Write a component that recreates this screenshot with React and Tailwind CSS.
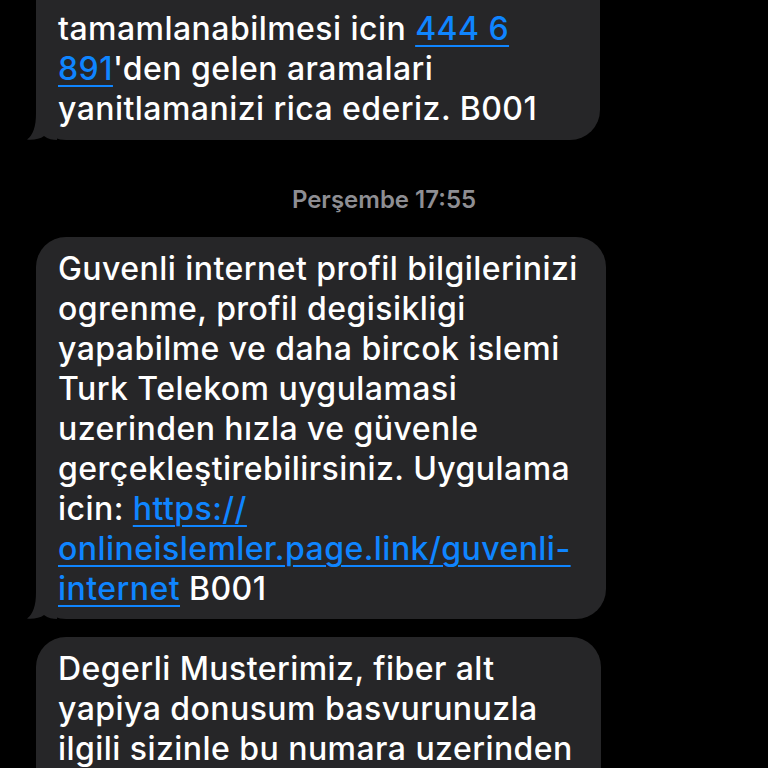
import React from "react";

// Received message bubbles (dark mode)
const bubbles = [
  {
    width: "w-[564px]",
    lines: [
      ["Sayin Musterimiz, internet"],
      ["Kurulumunuzun basari ile"],
      ["tamamlanabilmesi icin ", { link: "444 6" }],
      [{ link: "891" }, "'den gelen aramalari"],
      ["yanitlamanizi rica ederiz. B001"],
    ],
    tail: true,
  },
];

const thursday = [
  {
    width: "w-[570px]",
    lines: [
      ["Guvenli internet profil bilgilerinizi"],
      ["ogrenme, profil degisikligi"],
      ["yapabilme ve daha bircok islemi"],
      ["Turk Telekom uygulamasi"],
      ["uzerinden hızla ve güvenle"],
      ["gerçekleştirebilirsiniz. Uygulama"],
      ["icin: ", { link: "https://" }],
      [{ link: "onlineislemler.page.link/guvenli-" }],
      [{ link: "internet" }, " B001"],
    ],
    tail: true,
  },
  {
    width: "w-[565px]",
    lines: [
      ["Degerli Musterimiz, fiber alt"],
      ["yapiya donusum basvurunuzla"],
      ["ilgili sizinle bu numara uzerinden"],
      ["iletisime gecilecektir. Islemleriniz"],
    ],
    tail: false,
  },
];

const Tail = () => (
  <svg
    className="absolute left-[-9px] bottom-0"
    width="30"
    height="30"
    viewBox="0 0 30 30"
  >
    <path
      d="M9 3 C9 17 6 25 0 29.6 C6 30.4 13 29 17 26 C21 29 26 30 30 30 L30 0 L9 0 Z"
      fill="#262628"
    />
  </svg>
);

const Bubble = ({ width, lines, tail, className = "" }) => (
  <div
    className={`relative ml-[36px] ${width} rounded-[30px] bg-[#262628] pl-[22px] text-[32px] leading-[40px] font-medium tracking-[0.45px] text-white ${className}`}
  >
    {lines.map((line, i) => (
      <div key={i} className="whitespace-nowrap">
        {line.map((seg, j) =>
          typeof seg === "string" ? (
            <span key={j}>{seg}</span>
          ) : (
            <span
              key={j}
              className="text-[#0f85ff] underline decoration-2 underline-offset-[5px]"
            >
              {seg.link}
            </span>
          )
        )}
      </div>
    ))}
    {tail && <Tail />}
  </div>
);

export default function App() {
  return (
    <div className="w-[768px] h-[768px] overflow-hidden bg-black font-['Inter','Noto_Sans',sans-serif]">
      <div className="flex flex-col">
        {bubbles.map((b, i) => (
          <Bubble key={i} {...b} className="-mt-[81px] pt-[10px] pb-[11px]" />
        ))}

        {/* Timestamp */}
        <div className="mt-[46px] mb-[23px] text-center text-[24px] leading-[28px] font-semibold text-[#8e8e93]">
          Perşembe 17:55
        </div>

        <div className="flex flex-col gap-[18px]">
          {thursday.map((b, i) => (
            <Bubble key={i} {...b} className="pt-[12px] pb-[10px]" />
          ))}
        </div>
      </div>
    </div>
  );
}
